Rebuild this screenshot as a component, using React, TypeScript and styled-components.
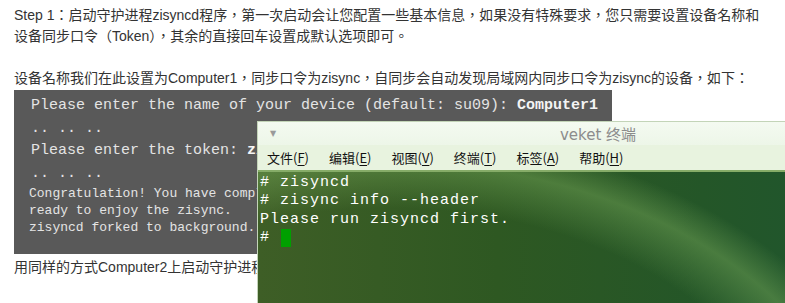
import React from "react";
import styled, { createGlobalStyle } from "styled-components";

const GlobalStyle = createGlobalStyle`
  html, body {
    margin: 0;
    padding: 0;
    background: #ffffff;
  }
`;

interface MenuItemProps {
  label: string;
  mnemonic: string;
}

const menus: MenuItemProps[] = [
  { label: "文件", mnemonic: "F" },
  { label: "编辑", mnemonic: "E" },
  { label: "视图", mnemonic: "V" },
  { label: "终端", mnemonic: "T" },
  { label: "标签", mnemonic: "A" },
  { label: "帮助", mnemonic: "H" },
];

const App = () => {
  return (
    <Page>
      <GlobalStyle />
      <Para>
        Step 1：启动守护进程zisyncd程序，第一次启动会让您配置一些基本信息，如果没有特殊要求，您只需要设置设备名称和
        <br />
        设备同步口令（Token），其余的直接回车设置成默认选项即可。
      </Para>
      <Para>
        设备名称我们在此设置为Computer1，同步口令为zisync，自同步会自动发现局域网内同步口令为zisync的设备，如下：
      </Para>
      <CodeBox>
        <CodeLine>
          Please enter the name of your device (default: su09): <b>Computer1</b>
        </CodeLine>
        <CodeLine>.. .. ..</CodeLine>
        <CodeLine>
          Please enter the token: <b>zisync</b>
        </CodeLine>
        <CodeLine>.. .. ..</CodeLine>
        <SmallLine>Congratulation! You have completed the configuration, now you are</SmallLine>
        <SmallLine>ready to enjoy the zisync.</SmallLine>
        <SmallLine>zisyncd forked to background.</SmallLine>
      </CodeBox>
      <After>用同样的方式Computer2上启动守护进程zisyncd程序，设备名称设置为Computer2，同步口令同样为zisync。</After>

      <Terminal>
        <TitleBar>
          <MenuArrow>▼</MenuArrow>
          <Title>veket 终端</Title>
        </TitleBar>
        <MenuBar>
          {menus.map((m) => (
            <MenuItem key={m.label}>
              {m.label}(<u>{m.mnemonic}</u>)
            </MenuItem>
          ))}
        </MenuBar>
        <Screen>
          <Streak />
          <TermLine># zisyncd</TermLine>
          <TermLine># zisync info --header</TermLine>
          <TermLine>Please run zisyncd first.</TermLine>
          <TermLine>
            # <Cursor />
          </TermLine>
        </Screen>
      </Terminal>
    </Page>
  );
};

export default App;

const Page = styled.div`
  position: relative;
  width: 785px;
  height: 303px;
  overflow: hidden;
  padding: 5px 0 0 14px;
  box-sizing: border-box;
  font-family: "Liberation Sans", "Noto Sans CJK TC", sans-serif;
  font-size: 14px;
  color: #333333;
`;

const Para = styled.div`
  line-height: 21px;
  white-space: nowrap;
  & + & {
    margin-top: 21px;
  }
`;

const CodeBox = styled.div`
  width: 598px;
  height: 164px;
  margin-top: 1px;
  padding: 5px 0 0 15px;
  box-sizing: border-box;
  background: #595959;
  color: #e4e4e4;
  font-family: "Liberation Mono", monospace;
  white-space: nowrap;
  overflow: hidden;

  b {
    color: #f4f4f4;
  }
`;

const CodeLine = styled.div`
  font-size: 15px;
  line-height: 22.5px;
  padding-left: 2px;
`;

const SmallLine = styled.div`
  font-size: 13px;
  line-height: 17px;
`;

const After = styled.div`
  margin-top: 3px;
  line-height: 21px;
  white-space: nowrap;
`;

const Terminal = styled.div`
  position: absolute;
  left: 257px;
  top: 121px;
  width: 684px;
  height: 200px;
  border: 1px solid #c3d4b8;
  display: flex;
  flex-direction: column;
  background: #eef6e9;
`;

const TitleBar = styled.div`
  height: 23px;
  position: relative;
  display: flex;
  align-items: center;
  justify-content: center;
  background: linear-gradient(#f4faf1, #edf6e8);
`;

const MenuArrow = styled.span`
  position: absolute;
  left: 12px;
  top: 7px;
  font-size: 8px;
  color: #9a9a9a;
  font-family: "DejaVu Sans", sans-serif;
`;

const Title = styled.span`
  font-family: "DejaVu Sans", "Noto Sans CJK SC", sans-serif;
  font-size: 15px;
  color: #8c8c8c;
  margin-left: -4px;
`;

const MenuBar = styled.div`
  height: 25px;
  display: flex;
  align-items: center;
  gap: 20px;
  padding-left: 9px;
  background: #e8f3df;
  border-bottom: 2px solid #86ac68;
  font-family: "Noto Sans CJK SC", sans-serif;
  font-size: 13px;
  color: #111111;
`;

const MenuItem = styled.span`
  white-space: nowrap;
  u {
    text-underline-offset: 2px;
  }
`;

const Screen = styled.div`
  position: relative;
  flex: 1;
  padding: 2px 0 0 2px;
  overflow: hidden;
  background: linear-gradient(90deg, #3e5e26 0%, #2e5822 35%, #245628 65%, #1c5632 100%);
`;

const Streak = styled.div`
  position: absolute;
  left: -400px;
  top: -40px;
  width: 1060px;
  height: 760px;
  border-radius: 50%;
  background: radial-gradient(
    closest-side,
    transparent 80%,
    rgba(120, 170, 90, 0.45) 92%,
    transparent 100%
  );
  pointer-events: none;
`;

const TermLine = styled.div`
  position: relative;
  font-family: "Liberation Mono", monospace;
  font-size: 15px;
  letter-spacing: 1px;
  line-height: 18.3px;
  color: #ffffff;
  white-space: pre;
  height: 18.3px;
  display: flex;
  align-items: center;
`;

const Cursor = styled.span`
  display: inline-block;
  width: 10px;
  height: 18px;
  background: #00a000;
  margin-left: 1px;
`;
